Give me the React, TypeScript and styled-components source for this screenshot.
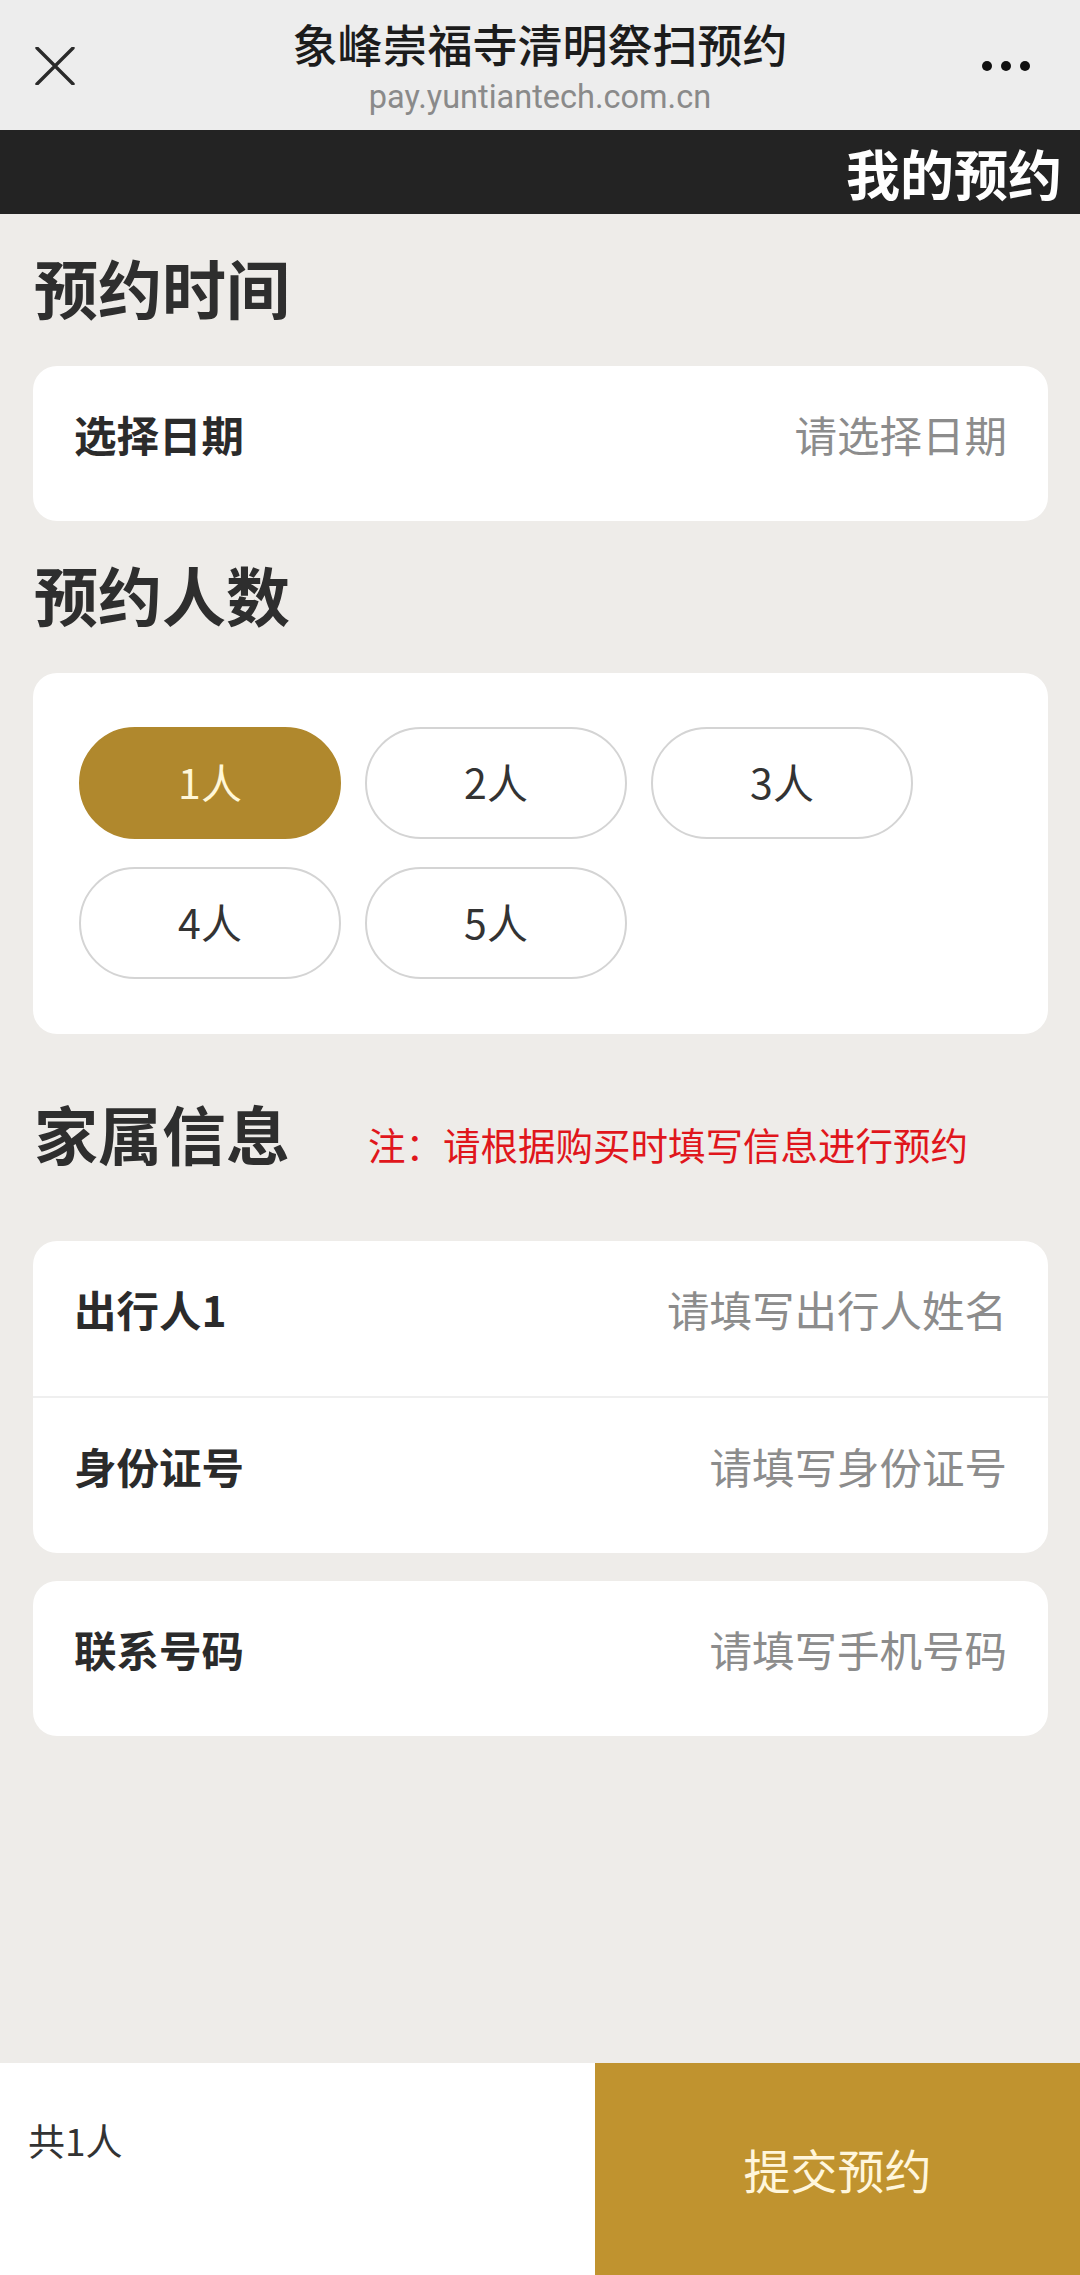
import React, { useState } from "react";
import styled, { createGlobalStyle } from "styled-components";

const GlobalStyle = createGlobalStyle`
  html, body {
    margin: 0;
    padding: 0;
    background: #eeece9;
  }
  body {
    font-family: "Noto Sans CJK SC", "Noto Sans", Roboto, sans-serif;
    color: #333;
  }
  * { box-sizing: border-box; }
`;

const Page = styled.div`
  display: flex;
  flex-direction: column;
  min-height: 100vh;
  background: #eeece9;
`;

const NavBar = styled.header`
  height: 130px;
  background: #ededed;
  display: grid;
  grid-template-columns: 110px 1fr 110px;
  align-items: center;
`;

const NavSide = styled.div<{ $align: "start" | "end" }>`
  display: flex;
  justify-content: ${(p) => (p.$align === "start" ? "flex-start" : "flex-end")};
  padding: ${(p) => (p.$align === "start" ? "0 0 0 35px" : "0 50px 0 0")};
  margin-top: 2px;
`;

const NavCenter = styled.div`
  display: flex;
  flex-direction: column;
  align-items: center;
  padding-top: 0;
`;

const NavTitle = styled.div`
  font-size: 45px;
  font-weight: 500;
  line-height: 60px;
  color: #1c1c1c;
  white-space: nowrap;
`;

const NavUrl = styled.div`
  font-family: Roboto, "Noto Sans", sans-serif;
  font-size: 32.5px;
  line-height: 40px;
  color: #8a8a8a;
  margin-top: 3px;
`;

const Dots = styled.div`
  display: flex;
  gap: 9px;
`;

const Dot = styled.span`
  width: 10px;
  height: 10px;
  border-radius: 50%;
  background: #111;
`;

const MyBar = styled.div`
  height: 84px;
  background: #232323;
  display: flex;
  align-items: center;
  justify-content: flex-end;
  padding-right: 18px;
`;

const MyBarText = styled.span`
  color: #fff;
  font-size: 54px;
  font-weight: 700;
  line-height: 1;
  margin-top: 2px;
`;

const Content = styled.main`
  padding: 0 32px 0 33px;
`;

const SectionHead = styled.div<{ $tall?: boolean }>`
  display: flex;
  align-items: baseline;
  padding-top: ${(p) => (p.$tall ? "53px" : "27px")};
  padding-bottom: ${(p) => (p.$tall ? "64px" : "35px")};
  padding-left: 1px;
`;

const SectionTitle = styled.h2`
  margin: 0;
  font-size: 64px;
  font-weight: 700;
  line-height: 90px;
  color: #2e2e2e;
`;

const Note = styled.span`
  margin-left: 78px;
  font-size: 37.5px;
  color: #e0161c;
  line-height: 1;
`;

const Card = styled.section`
  background: #fff;
  border-radius: 24px;
  overflow: hidden;
`;

const Row = styled.div<{ $divider?: boolean }>`
  display: flex;
  justify-content: space-between;
  align-items: center;
  height: ${(p) => (p.$divider ? "157px" : "155px")};
  padding: 0 41px 18px 41px;
  border-top: ${(p) => (p.$divider ? "2px solid #efefef" : "none")};
`;

const Label = styled.span`
  font-size: 42.5px;
  font-weight: 700;
  color: #2b2b2b;
  line-height: 1;
`;

const Placeholder = styled.span`
  font-size: 42.5px;
  color: #8c8c8c;
  line-height: 1;
`;

const PillGrid = styled.div`
  display: flex;
  flex-wrap: wrap;
  column-gap: 24px;
  row-gap: 28px;
  padding: 54px 46px 55px 46px;
`;

const Pill = styled.button<{ $active?: boolean }>`
  width: 262px;
  height: 112px;
  border-radius: 56px;
  border: 2px solid ${(p) => (p.$active ? "#b0882d" : "#d4d4d4")};
  background: ${(p) => (p.$active ? "#b0882d" : "#fff")};
  color: ${(p) => (p.$active ? "#fff7d8" : "#333")};
  font-family: "Noto Sans CJK SC", sans-serif;
  font-size: 41px;
  line-height: 1;
  display: flex;
  align-items: center;
  justify-content: center;
  padding: 0 0 4px 0;
  cursor: pointer;
`;

const Stack = styled.div`
  display: flex;
  flex-direction: column;
  gap: 28px;
`;

const Footer = styled.footer`
  margin-top: auto;
  height: 212px;
  display: grid;
  grid-template-columns: 595px 1fr;
`;

const Total = styled.div`
  background: #fff;
  padding: 55px 0 0 28px;
  font-size: 37px;
  color: #333;
  line-height: 1.2;
`;

const Submit = styled.button`
  border: none;
  background: #c0932f;
  color: #fff6dc;
  font-family: "Noto Sans CJK SC", sans-serif;
  font-size: 47px;
  display: flex;
  align-items: center;
  justify-content: center;
  padding: 0 0 2px 0;
  cursor: pointer;
`;

const CloseIcon = () => (
  <svg width="40" height="38" viewBox="0 0 40 38">
    <path d="M2 1 L38 37 M38 1 L2 37" stroke="#2a2a2a" strokeWidth="3.4" strokeLinecap="round" fill="none" />
  </svg>
);

export default function App() {
  const [count, setCount] = useState(1);
  const counts = [1, 2, 3, 4, 5];
  return (
    <Page>
      <GlobalStyle />
      <NavBar>
        <NavSide $align="start">
          <CloseIcon />
        </NavSide>
        <NavCenter>
          <NavTitle>象峰崇福寺清明祭扫预约</NavTitle>
          <NavUrl>pay.yuntiantech.com.cn</NavUrl>
        </NavCenter>
        <NavSide $align="end">
          <Dots>
            <Dot />
            <Dot />
            <Dot />
          </Dots>
        </NavSide>
      </NavBar>
      <MyBar>
        <MyBarText>我的预约</MyBarText>
      </MyBar>
      <Content>
        <SectionHead>
          <SectionTitle>预约时间</SectionTitle>
        </SectionHead>
        <Card>
          <Row>
            <Label>选择日期</Label>
            <Placeholder>请选择日期</Placeholder>
          </Row>
        </Card>

        <SectionHead>
          <SectionTitle>预约人数</SectionTitle>
        </SectionHead>
        <Card>
          <PillGrid>
            {counts.map((n) => (
              <Pill key={n} $active={n === count} onClick={() => setCount(n)}>
                {n}人
              </Pill>
            ))}
          </PillGrid>
        </Card>

        <SectionHead $tall>
          <SectionTitle>家属信息</SectionTitle>
          <Note>注：请根据购买时填写信息进行预约</Note>
        </SectionHead>
        <Stack>
          <Card>
            <Row>
              <Label>出行人1</Label>
              <Placeholder>请填写出行人姓名</Placeholder>
            </Row>
            <Row $divider>
              <Label>身份证号</Label>
              <Placeholder>请填写身份证号</Placeholder>
            </Row>
          </Card>
          <Card>
            <Row>
              <Label>联系号码</Label>
              <Placeholder>请填写手机号码</Placeholder>
            </Row>
          </Card>
        </Stack>
      </Content>
      <Footer>
        <Total>共{count}人</Total>
        <Submit>提交预约</Submit>
      </Footer>
    </Page>
  );
}
